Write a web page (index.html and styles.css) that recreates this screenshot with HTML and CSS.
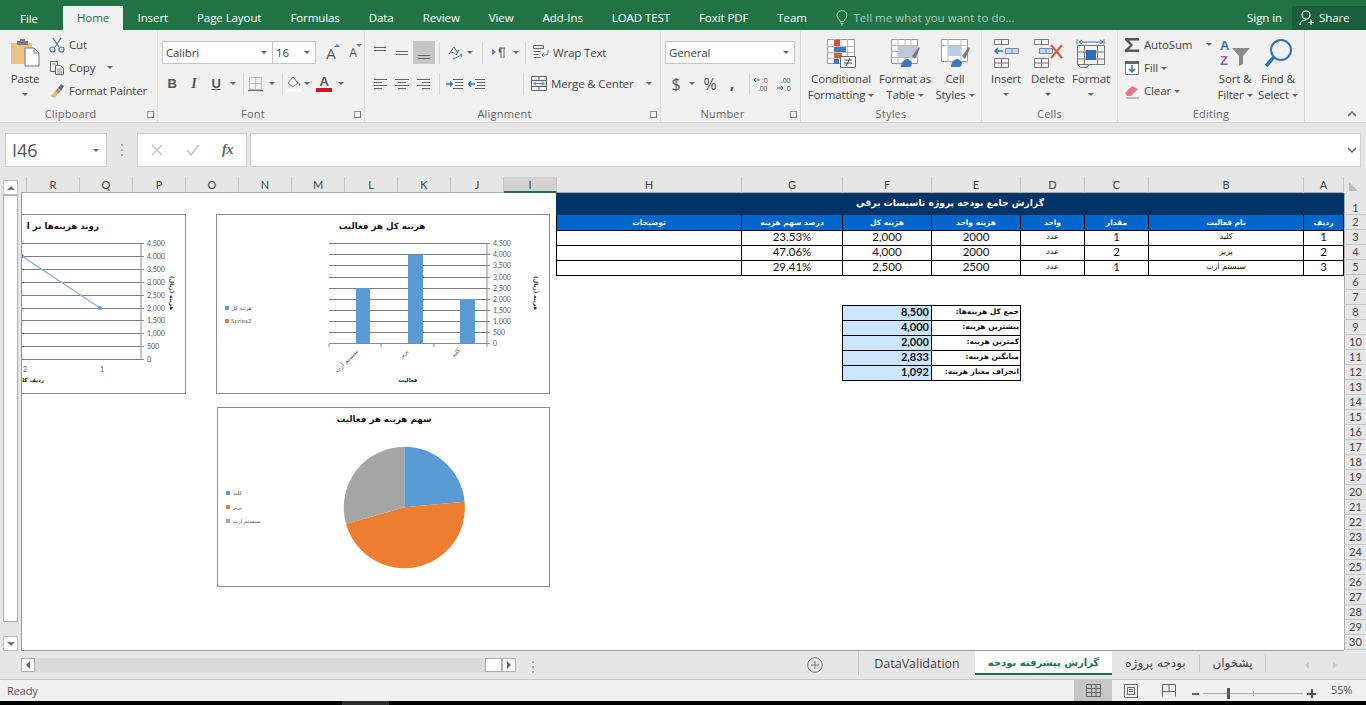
FILE: index.html
```html
<!DOCTYPE html>
<html lang="en">
<head>
<meta charset="utf-8">
<title>Excel</title>
<link rel="stylesheet" href="styles.css">
</head>
<body>
<nav class="tabs">
  <a class="tab file">File</a>
  <a class="tab active">Home</a>
  <a class="tab">Insert</a>
  <a class="tab">Page Layout</a>
  <a class="tab">Formulas</a>
  <a class="tab">Data</a>
  <a class="tab">Review</a>
  <a class="tab">View</a>
  <a class="tab">Add-Ins</a>
  <a class="tab">LOAD TEST</a>
  <a class="tab">Foxit PDF</a>
  <a class="tab">Team</a>
  <div class="tell">
    <svg width="12" height="16" viewBox="0 0 12 16" fill="none" stroke="#a9cdb8" stroke-width="1"><path d="M4 11.5C4 9 1 8.500 1 5.500a5 5 0 0 1 10 0C11 8.500 8 9 8 11.500zM4.500 13.500h3M5 15h2"/></svg>
    <span>Tell me what you want to do...</span>
  </div>
  <a class="signin">Sign in</a>
  <a class="share">
    <svg width="16" height="16" viewBox="0 0 16 16" fill="none" stroke="#fff" stroke-width="1.100"><circle cx="7" cy="5" r="4"/><path d="M1 15c0-3 2-5 6-5M12 9.500v5.500M9.500 12.500h5.500"/></svg>
    <span>Share</span>
  </a>
</nav>

<div class="ribbon">
  <section class="group g-clip">
    <div class="body row-body">
      <div class="big paste">
        <svg class="bigicon" width="30" height="30" viewBox="0 0 30 30"><path d="M1 5h21v21H1z" fill="#e8c383"/><path d="M7 3h3V1h5v2h3v4H7z" fill="#7d7d7d"/><path d="M15 10h9l5 5v13H15z" fill="#fff" stroke="#777"/><path d="M24 10v5h5" fill="none" stroke="#777"/></svg>
        <span>Paste</span>
        <i class="caret"></i>
      </div>
      <div class="smalls">
        <div class="small"><svg width="16" height="16" viewBox="0 0 16 16" fill="none" stroke="#5d6d80" stroke-width="1.200"><path d="M4 1l6 9M12 1L6 10"/><circle cx="3.500" cy="12.500" r="2.500" stroke="#3f78b5"/><circle cx="12.500" cy="12.500" r="2.500" stroke="#3f78b5"/></svg><span>Cut</span></div>
        <div class="small"><svg width="16" height="16" viewBox="0 0 16 16" fill="#fff" stroke="#666"><path d="M1.500 1.500h7v10h-7z"/><path d="M6.500 5.500h5l3 3v6h-8z"/><path d="M8 9h5M8 11h5M8 13h5M3 4h4" stroke-width=".8"/></svg><span>Copy</span><i class="caret cm"></i></div>
        <div class="small"><svg width="16" height="16" viewBox="0 0 16 16"><path d="M9 5l3-4 3 2-3 5z" fill="#6b6b6b"/><path d="M9 5l3 3-3 3-3-3z" fill="#999"/><path d="M6 8l3 3-3 4-5-2c2-1 4-3 5-5z" fill="#e6b872"/></svg><span>Format Painter</span></div>
      </div>
    </div>
    <div class="glabel lx">Clipboard<i class="launch"></i></div>
  </section>

  <section class="group g-font">
    <div class="body col-body">
      <div class="tool-row font-r1">
        <div class="combo c-font"><span>Calibri</span><i class="caret"></i></div>
        <div class="combo c-size"><span>16</span><i class="caret"></i></div>
        <div class="ib grow"><span class="a1">A</span><i class="tri up"></i></div>
        <div class="ib shrink"><span class="a2">A</span><i class="tri down"></i></div>
      </div>
      <div class="tool-row font-r2">
        <div class="ib fb">B</div>
        <div class="ib fi">I</div>
        <div class="ib fu">U</div>
        <i class="caret cb"></i>
        <i class="vsep"></i>
        <div class="ib"><svg width="15" height="15" viewBox="0 0 15 15" fill="none" stroke="#8a8a8a" stroke-dasharray="1 1"><path d="M1.500 1.500h12v12h-12zM7.500 1.500v12M1.500 7.500h12"/><path d="M0 14.500h15" stroke="#666" stroke-dasharray="none"/></svg></div>
        <i class="caret cb"></i>
        <i class="vsep"></i>
        <div class="ib"><svg width="18" height="18" viewBox="0 0 18 18"><path d="M3 8l5-6 5 6-5 4z" fill="#fff" stroke="#777"/><path d="M13 7l3 3-2 1z" fill="#4f81bd"/><path d="M1 14h15v3H1z" fill="#fff"/></svg></div>
        <i class="caret cb tight"></i>
        <div class="ib fa"><span>A</span><i class="bar"></i></div>
        <i class="caret cb"></i>
      </div>
    </div>
    <div class="glabel lx">Font<i class="launch"></i></div>
  </section>

  <section class="group g-align">
    <div class="body col-body">
      <div class="tool-row">
        <div class="ib"><svg width="16" height="14" viewBox="0 0 16 14" stroke="#666"><path d="M2 1.500h12M2 4.500h12"/></svg></div>
        <div class="ib"><svg width="16" height="14" viewBox="0 0 16 14" stroke="#666"><path d="M2 5.500h12M2 8.500h12"/></svg></div>
        <div class="ib on"><svg width="16" height="14" viewBox="0 0 16 14" stroke="#666"><path d="M2 9.500h12M2 12.500h12"/></svg></div>
        <i class="vsep"></i>
        <div class="ib narrow"><svg width="17" height="17" viewBox="0 0 17 17" fill="none"><path d="M2 10l5-7 3 5M3.500 8l4 1M9 11l3-5" stroke="#666"/><path d="M6 15l9-4M13 10l2 1-1 2" stroke="#4f81bd"/></svg></div>
        <i class="caret cb"></i>
        <i class="vsep s2"></i>
        <div class="ib wide"><svg width="14" height="12" viewBox="0 0 14 12"><path d="M0 2l4 3-4 3z" fill="#4f81bd"/><path d="M7 1h6M9 1v10M12 1v10" stroke="#666" fill="none"/><path d="M9 1a2.500 2.500 0 0 0 0 5z" fill="#666"/></svg></div>
        <i class="caret cb"></i>
        <i class="vsep s3"></i>
        <div class="act"><svg width="16" height="16" viewBox="0 0 16 16" fill="none" stroke="#666"><path d="M.5 1.500h10v3H.5zM.5 7.500h7M.5 10.500h5M.5 13.500h7"/><path d="M15 6v3a2 2 0 0 1-2 2H9l2-2M9 11l2 2" stroke="#4f81bd"/></svg><span>Wrap Text</span></div>
      </div>
      <div class="tool-row">
        <div class="ib"><svg width="16" height="12" viewBox="0 0 16 12" stroke="#666"><path d="M2 1.500h13M2 4.500h8M2 7.500h13M2 10.500h8"/></svg></div>
        <div class="ib"><svg width="16" height="12" viewBox="0 0 16 12" stroke="#666"><path d="M1 1.500h14M4 4.500h8M1 7.500h14M4 10.500h8"/></svg></div>
        <div class="ib"><svg width="16" height="12" viewBox="0 0 16 12" stroke="#666"><path d="M1 1.500h13M6 4.500h8M1 7.500h13M6 10.500h8"/></svg></div>
        <i class="vsep"></i>
        <div class="ib indent"><svg width="17" height="12" viewBox="0 0 17 12" stroke="#666" fill="none"><path d="M7 1.500h10M9 4.500h8M9 7.500h8M7 10.500h10"/><path d="M0 6h6M4 3.500L6.500 6 4 8.500" stroke="#2f75b5" stroke-width="1.300"/></svg></div>
        <div class="ib indent2"><svg width="17" height="12" viewBox="0 0 17 12" stroke="#666" fill="none"><path d="M7 1.500h10M9 4.500h8M9 7.500h8M7 10.500h10"/><path d="M7 6H1M3 3.500L.5 6 3 8.500" stroke="#2f75b5" stroke-width="1.300"/></svg></div>
        <i class="vsep s4"></i>
        <div class="act"><svg width="16" height="15" viewBox="0 0 16 15" fill="none" stroke="#666"><path d="M.5.500h15v14H.5zM.500 4.500h15M.500 10.500h15M8 .5v4M8 10.500v4"/><path d="M3 7.500h10M5 5.500l-2 2 2 2M11 5.500l2 2-2 2" stroke="#4f81bd"/></svg><span>Merge &amp; Center</span><i class="caret cm2"></i></div>
      </div>
    </div>
    <div class="glabel lx">Alignment<i class="launch"></i></div>
  </section>

  <section class="group g-num">
    <div class="body col-body">
      <div class="tool-row">
        <div class="combo c-num"><span>General</span><i class="caret"></i></div>
      </div>
      <div class="tool-row num-r2">
        <div class="ib dollar">$</div>
        <i class="caret cb"></i>
        <div class="ib pct">%</div>
        <div class="ib comma">,</div>
        <i class="vsep"></i>
        <div class="ib dec"><svg width="18" height="16" viewBox="0 0 18 16"><path d="M7 4H1M3 2L1 4l2 2" fill="none" stroke="#2f75b5"/><text x="9" y="7" class="dt">.0</text><text x="5" y="14.500" class="dt">.00</text></svg></div>
        <div class="ib dec"><svg width="18" height="16" viewBox="0 0 18 16"><text x="5" y="7" class="dt">.00</text><path d="M7 12H1M5 10l2 2-2 2" fill="none" stroke="#2f75b5"/><text x="9" y="14.500" class="dt">.0</text></svg></div>
      </div>
    </div>
    <div class="glabel lx">Number<i class="launch"></i></div>
  </section>

  <section class="group g-styles">
    <div class="body row-body">
      <div class="big b-cf">
        <svg class="bigicon" width="30" height="30" viewBox="0 0 30 30"><path d="M1.500 1.500h27v24h-27z" fill="#fff" stroke="#999"/><path d="M1 8.500h28M1 14.500h28M1 20.500h28M8.500 1v25M15 1v25M21.500 1v25" stroke="#bbb"/><path d="M8 2h6v6H8z" fill="#d0543d"/><path d="M8 9h12v5H8z" fill="#3a78bf"/><path d="M8 15h8v5H8z" fill="#d0632d"/><path d="M8 21h5v5H8z" fill="#3a78bf"/><path d="M14.500 18.500h15v11h-15z" fill="#fff" stroke="#666"/><path d="M18 22h8M18 25h8M24 20l-4 8" stroke="#444" fill="none"/></svg>
        <span>Conditional</span>
        <span>Formatting<i class="caret il"></i></span>
      </div>
      <div class="big b-ft">
        <svg class="bigicon" width="30" height="30" viewBox="0 0 30 30"><path d="M1.500 1.500h26v24h-26z" fill="#fff" stroke="#999"/><path d="M1 7.500h27M1 13.500h27M1 19.500h27M8 1v25M15 1v25M21 1v25" stroke="#bbb"/><path d="M8 8h20v11H8z" fill="#bcc9d9"/><path d="M22 18l7-9 1 1-5 11z" fill="#777"/><path d="M11 29c0-5 3-8 7-8l4 3c0 3-1 5-3 5z" fill="#3a78bf"/></svg>
        <span>Format as</span>
        <span>Table<i class="caret il"></i></span>
      </div>
      <div class="big b-cs">
        <svg class="bigicon" width="30" height="30" viewBox="0 0 30 30"><path d="M1.500 1.500h26v22h-26z" fill="#fff" stroke="#999"/><path d="M1 7.500h27M8 1v23M21 1v23" stroke="#bbb"/><path d="M8 8h13v10H8z" fill="#b6cde6"/><path d="M22 18l7-9 1 1-5 11z" fill="#777"/><path d="M11 29c0-5 3-8 7-8l4 3c0 3-1 5-3 5z" fill="#3a78bf"/></svg>
        <span>Cell</span>
        <span>Styles<i class="caret il"></i></span>
      </div>
    </div>
    <div class="glabel">Styles</div>
  </section>

  <section class="group g-cells">
    <div class="body row-body">
      <div class="big b-ins">
        <svg class="bigicon" width="30" height="30" viewBox="0 0 30 30" fill="none" stroke="#777"><path d="M3.500 1.500h14v5h-14zM10.500 1.500v5M3.500 20.500h14v9h-14zM3.500 25h14M10.500 20.500v9"/><path d="M14.500 10.500h13v5h-13zM21 10.500v5" fill="#c9d7e8" stroke="#6f8db0"/><path d="M12 13H4M7 10l-3 3 3 3" stroke="#2f75b5" stroke-width="1.500"/></svg>
        <span>Insert</span>
        <i class="caret"></i>
      </div>
      <div class="big b-del">
        <svg class="bigicon" width="30" height="30" viewBox="0 0 30 30" fill="none" stroke="#777"><path d="M1.500 1.500h14v5h-14zM8.500 1.500v5M1.500 20.500h14v9h-14zM1.500 25h14M8.500 20.500v9"/><path d="M6.500 10.500h13v5h-13zM13 10.500v5" fill="#c9d7e8" stroke="#6f8db0"/><path d="M18 7l11 13M29 7L18 20" stroke="#d9593d" stroke-width="2"/></svg>
        <span>Delete</span>
        <i class="caret"></i>
      </div>
      <div class="big b-fmt">
        <svg class="bigicon" width="30" height="30" viewBox="0 0 30 30" fill="none" stroke="#777"><path d="M1.500 7.500h27v19h-27zM8.500 7.500v19M21.500 7.500v19M1.500 14h27M1.500 21h27"/><path d="M10 12h10v10H10z" fill="#2f6db0" stroke="none"/><path d="M1 1.500v5M28 1.500v5M3 4h24M6 2L3 4l3 2M24 2l3 2-3 2" stroke="#2f75b5"/><path d="M1.500 26.500l3 3h6l3-3" /></svg>
        <span>Format</span>
        <i class="caret"></i>
      </div>
    </div>
    <div class="glabel">Cells</div>
  </section>

  <section class="group g-edit">
    <div class="body row-body">
      <div class="smalls edit-list">
        <div class="small"><svg width="16" height="16" viewBox="0 0 16 16"><path d="M1 1h14v2.500H5L9 8l-4 4.500h10V15H1v-2l5-5-5-5z" fill="#595959"/></svg><span>AutoSum</span><i class="caret cs"></i></div>
        <div class="small"><svg width="16" height="16" viewBox="0 0 16 16"><path d="M1.500 1.500h13v13h-13z" fill="#fff" stroke="#777"/><path d="M1 1h14v3H1z" fill="#666"/><path d="M8 5v7M5 9l3 3 3-3" fill="none" stroke="#2f75b5" stroke-width="1.500"/></svg><span>Fill<i class="caret il"></i></span></div>
        <div class="small"><svg width="16" height="16" viewBox="0 0 16 16"><path d="M1 10l7-7 6 3-7 7H3z" fill="#e8788e"/><path d="M2 15h13" stroke="#888"/></svg><span>Clear<i class="caret il"></i></span></div>
      </div>
      <div class="big b-sort">
        <svg class="bigicon" width="32" height="30" viewBox="0 0 32 30"><text x="1" y="12" class="az a">A</text><text x="1" y="27" class="az z">Z</text><path d="M13 10h18l-7 8v8l-4 2V18z" fill="#8a8a8a"/></svg>
        <span>Sort &amp;</span>
        <span>Filter<i class="caret il"></i></span>
      </div>
      <div class="big b-find">
        <svg class="bigicon" width="30" height="30" viewBox="0 0 30 30" fill="none"><circle cx="18" cy="12" r="10" stroke="#2f75b5" stroke-width="2"/><path d="M11 19L3 28" stroke="#2f75b5" stroke-width="3.500"/></svg>
        <span>Find &amp;</span>
        <span>Select<i class="caret il"></i></span>
      </div>
    </div>
    <div class="glabel">Editing</div>
  </section>

  <svg class="collapse" width="10" height="6" viewBox="0 0 10 6" fill="none" stroke="#666" stroke-width="1.500"><path d="M1 5l4-4 4 4"/></svg>
</div>

<div class="formula">
  <div class="namebox"><span>I46</span><i class="caret"></i></div>
  <div class="fdots"><i></i><i></i><i></i></div>
  <div class="fxbox">
    <svg width="14" height="14" viewBox="0 0 14 14" stroke="#c6c6c6" stroke-width="1.600"><path d="M2 2l10 10M12 2L2 12"/></svg>
    <svg width="16" height="14" viewBox="0 0 16 14" stroke="#c6c6c6" stroke-width="1.600" fill="none"><path d="M2 7l4 5 8-10"/></svg>
    <em>fx</em>
  </div>
  <div class="finput"><svg width="10" height="6" viewBox="0 0 10 6" fill="none" stroke="#666" stroke-width="1.500"><path d="M1 1l4 4 4-4"/></svg></div>
</div>

<div class="workbook">
  <div class="vscroll">
    <div class="vb"><i class="tri up gray"></i></div>
    <div class="vthumb"></div>
    <div class="vb"><i class="tri down gray"></i></div>
  </div>
  <div class="main">
    <div class="cols">
      <div class="ch"></div><div class="ch">R</div><div class="ch">Q</div><div class="ch">P</div><div class="ch">O</div><div class="ch">N</div><div class="ch">M</div><div class="ch">L</div><div class="ch">K</div><div class="ch">J</div><div class="ch sel">I</div><div class="ch">H</div><div class="ch">G</div><div class="ch">F</div><div class="ch">E</div><div class="ch">D</div><div class="ch">C</div><div class="ch">B</div><div class="ch">A</div>
    </div>
    <div class="sheet">
      <table class="report" dir="rtl">
        <colgroup><col class="w40"><col class="w155"><col class="w64"><col class="w64"><col class="w89"><col class="w89"><col class="w101"><col class="w185"></colgroup>
        <tr class="r-title"><td colspan="8">گزارش جامع بودجه پروژه تاسیسات برقي</td></tr>
        <tr class="r-head"><td>ردیف</td><td>نام فعالیت</td><td>مقدار</td><td>واحد</td><td>هزینه واحد</td><td>هزینه کل</td><td>درصد سهم هزینه</td><td>توضیحات</td></tr>
        <tr class="r-data"><td>1</td><td class="fa-t">کلید</td><td>1</td><td class="fa-t">عدد</td><td>2000</td><td>2,000</td><td>23.53%</td><td></td></tr>
        <tr class="r-data"><td>2</td><td class="fa-t">پریز</td><td>2</td><td class="fa-t">عدد</td><td>2000</td><td>4,000</td><td>47.06%</td><td></td></tr>
        <tr class="r-data"><td>3</td><td class="fa-t">سیستم ارت</td><td>1</td><td class="fa-t">عدد</td><td>2500</td><td>2,500</td><td>29.41%</td><td></td></tr>
      </table>
      <table class="summary" dir="rtl">
        <colgroup><col class="w89"><col class="w89"></colgroup>
        <tr><th>جمع کل هزینه‌ها:</th><td>8,500</td></tr>
        <tr><th>بیشترین هزینه:</th><td>4,000</td></tr>
        <tr><th>کمترین هزینه:</th><td>2,000</td></tr>
        <tr><th>میانگین هزینه:</th><td>2,833</td></tr>
        <tr><th>انحراف معیار هزینه:</th><td>1,092</td></tr>
      </table>

      <div class="chart c-line">
        <svg width="333" height="179" viewBox="-148 214 333 179">
          <text x="99" y="229" class="ctitle" direction="rtl" text-anchor="start">روند هزینه‌ها بر ا</text>
          <g class="gl"><path d="M22 243.500H141M22 256.500H141M22 269.500H141M22 282.500H141M22 295.500H141M22 308.500H141M22 320.500H141M22 333.500H141M22 346.500H141M22 359.500H141"/></g>
          <path d="M141 243v117M141 243.500h3M141 256.500h3M141 269.500h3M141 282.500h3M141 295.500h3M141 308.500h3M141 320.500h3M141 333.500h3M141 346.500h3M141 359.500h3" class="ax"/>
          <path d="M22 256L100 308" class="ln"/>
          <circle cx="22" cy="256" r="2" class="pt"/><circle cx="100" cy="308" r="2" class="pt"/>
          <g class="tk"><text x="147" y="246">4,500</text><text x="147" y="259">4,000</text><text x="147" y="272">3,500</text><text x="147" y="285">3,000</text><text x="147" y="298">2,500</text><text x="147" y="311">2,000</text><text x="147" y="323">1,500</text><text x="147" y="336">1,000</text><text x="147" y="349">500</text><text x="147" y="362">0</text><text x="100" y="372">1</text><text x="23" y="372">2</text></g>
          <text x="44" y="382" class="atitle" direction="rtl" text-anchor="start">ردیف کا</text>
          <text transform="translate(170 293) rotate(90)" class="atitle" text-anchor="middle">هزینه (ریال)</text>
        </svg>
      </div>

      <div class="chart c-bar">
        <svg width="333" height="179" viewBox="216 214 333 179">
          <text x="382" y="229" class="ctitle" text-anchor="middle">هزینه کل هر فعالیت</text>
          <path class="gl" d="M329 243.500H487M329 254.500H487M329 265.500H487M329 277.500H487M329 288.500H487M329 299.500H487M329 310.500H487M329 321.500H487M329 332.500H487M329 343.500H487"/>
          <path fill="#5b9bd5" d="M356 288h14v56h-14zM408 255h15v89h-15zM460 299h15v45h-15z"/>
          <path class="ax" d="M329 343.500H487M487 243v101M487 243.500h3M487 254.500h3M487 265.500h3M487 277.500h3M487 288.500h3M487 299.500h3M487 310.500h3M487 321.500h3M487 332.500h3M487 343.500h3M329 344v3M381 344v3M434 344v3M487 344v3"/>
          <g class="tk"><text x="493" y="246">4,500</text><text x="493" y="257">4,000</text><text x="493" y="268">3,500</text><text x="493" y="280">3,000</text><text x="493" y="291">2,500</text><text x="493" y="302">2,000</text><text x="493" y="313">1,500</text><text x="493" y="324">1,000</text><text x="493" y="335">500</text><text x="493" y="346">0</text></g>
          <text transform="translate(534 293) rotate(90)" class="atitle" text-anchor="middle">هزینه (ریال)</text>
          <text x="408" y="382" class="atitle" text-anchor="middle">فعالیت</text>
          <g class="catl" text-anchor="middle"><text transform="translate(348 362) rotate(-45)">سیستم ارت</text><text transform="translate(405 355) rotate(-45)">پریز</text><text transform="translate(457 354) rotate(-45)">کلید</text></g>
          <rect x="225" y="306" width="4" height="4" fill="#5b9bd5"/><rect x="225" y="319" width="4" height="4" fill="#ed7d31"/>
          <text x="231" y="310" class="lg">هزینه کل</text><text x="231" y="323" class="lg">Series2</text>
        </svg>
      </div>

      <div class="chart c-pie">
        <svg width="333" height="180" viewBox="217 407 333 180">
          <text x="384" y="422" class="ctitle" text-anchor="middle">سهم هزینه هر فعالیت</text>
          <path fill="#5b9bd5" d="M404.300 507.300V446.800A60.500 60.500 0 0 1 464.600 501.700z"/>
          <path fill="#ed7d31" d="M404.300 507.300L464.600 501.700A60.500 60.500 0 0 1 346.100 523.900z"/>
          <path fill="#a5a5a5" d="M404.300 507.300L346.100 523.900A60.500 60.500 0 0 1 404.300 446.800z"/>
          <rect x="226" y="491" width="4" height="4" fill="#5b9bd5"/><rect x="226" y="505" width="4" height="4" fill="#ed7d31"/><rect x="226" y="519" width="4" height="4" fill="#a5a5a5"/>
          <text x="233" y="495" class="lg">کلید</text><text x="233" y="509" class="lg">پریز</text><text x="233" y="523" class="lg">سیستم ارت</text>
        </svg>
      </div>
    </div>
  </div>
  <div class="rows">
    <div class="corner"><i></i></div>
    <div class="rh r1">1</div><div class="rh">2</div><div class="rh">3</div><div class="rh">4</div><div class="rh">5</div><div class="rh">6</div><div class="rh">7</div><div class="rh">8</div><div class="rh">9</div><div class="rh">10</div><div class="rh">11</div><div class="rh">12</div><div class="rh">13</div><div class="rh">14</div><div class="rh">15</div><div class="rh">16</div><div class="rh">17</div><div class="rh">18</div><div class="rh">19</div><div class="rh">20</div><div class="rh">21</div><div class="rh">22</div><div class="rh">23</div><div class="rh">24</div><div class="rh">25</div><div class="rh">26</div><div class="rh">27</div><div class="rh">28</div><div class="rh">29</div><div class="rh">30</div>
  </div>
</div>

<div class="sheetbar">
  <div class="hbtn"><i class="tri left"></i></div>
  <div class="htrack"><div class="hthumb"></div></div>
  <div class="hbtn"><i class="tri right"></i></div>
  <div class="hdots"><i></i><i></i><i></i></div>
  <div class="addsheet"><svg width="16" height="16" viewBox="0 0 16 16" fill="none" stroke="#777"><circle cx="8" cy="8" r="7.300"/><path d="M4 8h8M8 4v8"/></svg></div>
  <div class="stabs">
    <div class="stab">DataValidation</div>
    <div class="stab cur">گزارش پیشرفته بودجه</div>
    <div class="stab fa-s b1">بودجه پروژه</div>
    <div class="stab fa-s b2">پشخوان</div>
  </div>
  <div class="snav"><i class="tri left pale"></i><i class="tri right pale"></i></div>
</div>

<footer class="status">
  <span class="ready">Ready</span>
  <div class="views">
    <div class="vw on"><svg width="15" height="13" viewBox="0 0 15 13" fill="none" stroke="#666"><path d="M.5.500h14v12H.5zM.500 4.500h14M.500 8.500h14M5.500.5v12M10 .5v12"/></svg></div>
    <div class="vw"><svg width="14" height="14" viewBox="0 0 14 14" fill="none" stroke="#666"><path d="M.5.500h13v13H.5zM3.500 3.500h7v7h-7zM5 5.500h4M5 7.500h4"/></svg></div>
    <div class="vw"><svg width="14" height="13" viewBox="0 0 14 13" fill="none" stroke="#666"><path d="M.5 12.500V.5h13v12M7 .5v7H.5M7 7.500h6.500"/></svg></div>
  </div>
  <div class="zoomer">
    <i class="minus"></i>
    <div class="slider"><i class="thumb"></i><i class="mid"></i></div>
    <i class="plus"></i>
  </div>
  <span class="pctz">55%</span>
</footer>
<div class="taskbar"><i></i></div>
</body>
</html>
```
FILE: styles.css
```css
* { box-sizing: border-box; }
html, body { margin: 0; padding: 0; }
body { width: 1366px; height: 705px; overflow: hidden; background: #e6e6e6; font-family: "Open Sans", "Noto Sans", sans-serif; font-size: 11.5px; letter-spacing: -.15px; color: #444; }
i { display: block; font-style: normal; }
svg { display: block; flex: none; }

/* top tabs */
.tabs { height: 30px; background: #217346; display: flex; align-items: flex-end; padding-left: 9px; color: #fff; letter-spacing: -.08px; }
.tab { height: 24px; padding: 4px 14.5px 0; white-space: nowrap; }
.tab.file { width: 40px; padding: 5px 0 0; text-align: center; margin-right: 14px; }
.tab.active { width: 60px; background: #f1f1f1; color: #217346; padding: 4px 0 0; text-align: center; }
.tell { height: 24px; margin-left: 15px; padding-bottom: 1px; display: flex; gap: 5px; align-items: center; color: #a9cdb8; letter-spacing: .03px; }
.signin { height: 24px; padding-top: 4px; margin-left: auto; }
.share { width: 74px; height: 24px; margin-left: 10px; padding-bottom: 1px; background: #1b5e3a; display: flex; gap: 4px; align-items: center; padding-left: 7px; }

/* ribbon */
.ribbon { height: 93px; background: #f1f1f1; border-bottom: 1px solid #d4d4d4; display: flex; padding-top: 1px; position: relative; }
.group { display: flex; flex-direction: column; height: 91px; border-right: 1px solid #dcdcdc; }
.g-clip { width: 158px; }
.g-font { width: 207px; }
.g-align { width: 296px; }
.g-num { width: 140px; }
.g-styles { width: 181px; }
.g-cells { width: 136px; }
.g-edit { width: 187px; }
.body { height: 74px; }
.row-body { display: flex; }
.col-body { display: flex; flex-direction: column; gap: 8px; padding-top: 10px; }
.glabel { height: 17px; text-align: center; font-size: 11px; line-height: 18px; color: #666; position: relative; letter-spacing: .2px; }
.glabel.lx { padding-right: 16px; }
.launch { position: absolute; right: 3px; top: 6px; width: 7px; height: 7px; border-left: 1px solid #999; border-top: 1px solid #999; border-right: 1px solid #777; border-bottom: 1px solid #777; }

.caret { width: 0; height: 0; border-left: 3px solid transparent; border-right: 3px solid transparent; border-top: 3px solid #666; flex: none; }
.caret.il { display: inline-block; margin-left: 3px; vertical-align: middle; }

.big { display: flex; flex-direction: column; align-items: center; padding-top: 7px; line-height: 16px; white-space: nowrap; color: #444; }
.bigicon { margin-bottom: 3px; }
.big > .caret { margin-top: 6px; }
.paste { width: 38px; margin-left: 6px; }
.smalls { margin-left: 5px; padding-top: 2px; }
.small { height: 23px; display: flex; align-items: center; gap: 4px; white-space: nowrap; }
.cm { margin-left: 8px; }
.cs { margin-left: 10px; }
.edit-list { width: 90px; margin-left: 6px; }

.tool-row { display: flex; align-items: center; height: 23px; }
.combo { height: 23px; background: #fff; border: 1px solid #c6c6c6; display: flex; align-items: center; justify-content: space-between; padding: 0 5px 1px 3px; }
.c-font { width: 111px; margin-left: 4px; }
.c-size { width: 44px; margin-left: -1px; }
.c-num { width: 130px; margin-left: 4px; }
.ib { width: 22px; height: 23px; display: flex; align-items: center; justify-content: center; flex: none; position: relative; }
.ib.on { background: #c6c6c6; }
.ib.narrow { width: 17px; margin-left: 7px; }
.ib.wide { width: 22px; margin-left: 5px; }
.vsep { width: 1px; height: 22px; background: #d4d4d4; margin-left: 4px; flex: none; }
.vsep.s2 { margin-left: 6px; }
.vsep.s3 { margin-left: 3px; }
.vsep.s4 { margin-left: 38px; }
.cb { margin: 0 3px; }
.cb.tight { margin: 0 3px 0 -1px; }
.act { display: flex; align-items: center; gap: 4px; margin-left: 7px; padding-bottom: 1px; white-space: nowrap; }
.cm2 { margin-left: 9px; }
.g-align .tool-row > .ib:first-child { margin-left: 4px; }
.indent { margin-left: 6px; width: 17px; }
.indent2 { margin-left: 5px; width: 17px; }
.grow { margin-left: 5px; width: 20px; }
.shrink { margin-left: 2px; width: 20px; }
.a1 { font-size: 15px; color: #555; }
.a2 { font-size: 12px; color: #555; }
.tri { width: 0; height: 0; border-left: 3px solid transparent; border-right: 3px solid transparent; }
.tri.up { border-bottom: 3px solid #4f81bd; }
.tri.down { border-top: 3px solid #4f81bd; }
.grow .tri, .shrink .tri { position: absolute; right: 1px; top: 3px; }
.tri.gray.up { border-left-width: 4px; border-right-width: 4px; border-bottom: 4px solid #777; }
.tri.gray.down { border-left-width: 4px; border-right-width: 4px; border-top: 4px solid #777; }
.tri.left { border: 3px solid transparent; border-left: 0; border-right: 4px solid #666; border-top-width: 4px; border-bottom-width: 4px; }
.tri.right { border: 3px solid transparent; border-right: 0; border-left: 4px solid #666; border-top-width: 4px; border-bottom-width: 4px; }
.tri.pale.left { border-right-color: #c8c8c8; }
.tri.pale.right { border-left-color: #c8c8c8; }
.font-r2 { margin-left: 3px; }
.fb { font-family: "Liberation Sans", sans-serif; font-weight: bold; font-size: 13px; color: #555; }
.fi { font-family: "Liberation Serif", serif; font-style: italic; font-weight: bold; font-size: 14px; color: #555; }
.fu { font-family: "Liberation Sans", sans-serif; font-weight: bold; font-size: 13px; color: #555; text-decoration: underline; }
.fa { flex-direction: column; font-family: "Liberation Sans", sans-serif; font-weight: bold; font-size: 13px; line-height: 12px; color: #555; }
.fa .bar { width: 16px; height: 4px; background: #d9121f; }
.num-r2 { margin-left: 5px; }
.dollar { font-size: 16px; width: 20px; color: #555; }
.pct { font-size: 16px; margin-left: 1px; color: #555; }
.comma { font-size: 16px; font-weight: bold; color: #555; align-items: flex-start; }
.num-r2 .vsep { margin-left: 6px; }
.num-r2 .dec { margin-left: 1px; }
.dt { font-family: "Open Sans", sans-serif; font-size: 7px; fill: #555; }

.b-cf { width: 62px; margin-left: 9px; }
.b-ft { width: 58px; margin-left: 4px; }
.b-cs { width: 42px; }
.b-ins { width: 42px; margin-left: 3px; }
.b-del { width: 42px; }
.b-fmt { width: 44px; }
.b-sort { width: 42px; }
.b-find { width: 42px; margin-left: 1px; }
.az { font-family: "Liberation Sans", sans-serif; font-size: 13px; font-weight: bold; }
.az.a { fill: #3a78bf; }
.az.z { fill: #8f5fb5; }
.collapse { position: absolute; right: 9px; bottom: 5px; }

/* formula bar */
.formula { height: 54px; padding-top: 10px; display: flex; background: #e6e6e6; }
.namebox { width: 102px; height: 34px; margin-left: 5px; background: #fff; border: 1px solid #d0d0d0; display: flex; align-items: center; justify-content: space-between; padding: 0 7px 0 6px; font-size: 18px; letter-spacing: 0; color: #555; }
.fdots { width: 30px; height: 34px; display: flex; flex-direction: column; gap: 3px; align-items: center; justify-content: center; }
.fdots i, .hdots i { width: 2px; height: 2px; background: #aaa; }
.fxbox { width: 110px; height: 34px; background: #fff; border: 1px solid #d0d0d0; display: flex; align-items: center; gap: 21px; padding-left: 12px; }
.fxbox em { font-family: "Liberation Serif", serif; font-size: 14px; color: #666; font-weight: bold; }
.finput { width: 1111px; height: 34px; margin-left: 3px; background: #fff; border: 1px solid #d0d0d0; display: flex; align-items: center; justify-content: flex-end; padding-right: 3px; }

/* workbook */
.workbook { height: 474px; display: flex; }
.vscroll { width: 21px; padding: 3px 3px 0 3px; display: flex; flex-direction: column; }
.vb { width: 15px; height: 15px; background: #fff; border: 1px solid #c0c0c0; display: flex; align-items: center; justify-content: center; flex: none; }
.vthumb { height: 428px; background: #fff; border: 1px solid #ababab; margin-bottom: 14px; }
.main { width: 1323px; display: flex; flex-direction: column; }
.cols { height: 16px; padding-left: 1px; display: grid; grid-template-columns: 5px repeat(10, 53px) 185px 101px 89px 89px 64px 64px 155px 40px; background: #e6e6e6; border-bottom: 1px solid #ababab; }
.ch { font-family: Lato, sans-serif; font-size: 11px; letter-spacing: 0; line-height: 15px; text-align: center; color: #444; border-right: 1px solid #c6c6c6; }
.ch.sel { background: #d2d2d2; border-bottom: 2px solid #217346; height: 16px; }
.sheet { height: 458px; position: relative; overflow: hidden; background: #fff; border-left: 1px solid #9a9a9a; border-bottom: 1px solid #9a9a9a; }
.rows { width: 22px; display: flex; flex-direction: column; }
.corner { height: 16px; background: #e6e6e6; position: relative; }
.corner i { position: absolute; left: 5px; bottom: 2px; width: 0; height: 0; border-bottom: 9px solid #bcbcbc; border-right: 9px solid transparent; }
.rh { height: 15px; flex: none; background: #e6e6e6; border-bottom: 1px solid #c6c6c6; border-left: 1px solid #ababab; font-family: Lato, sans-serif; font-size: 11px; letter-spacing: 0; line-height: 14px; text-align: center; color: #444; }
.rh.r1 { height: 22px; line-height: 29px; }

/* tables */
table { border-collapse: collapse; table-layout: fixed; font-family: Lato, "DejaVu Sans", sans-serif; letter-spacing: 0; color: #111; }
.report { width: 787px; margin-left: auto; font-size: 11.5px; }
.w40 { width: 40px; } .w64 { width: 64px; } .w89 { width: 89px; } .w101 { width: 101px; } .w155 { width: 155px; } .w185 { width: 185px; }
td, th { padding: 0; overflow: hidden; white-space: nowrap; }
.r-title td { height: 22px; padding-bottom: 3px; background: #003366; color: #fff; font-family: "DejaVu Sans", sans-serif; font-weight: bold; font-size: 9.200px; text-align: center; }
.r-head td { height: 15px; background: #0066cc; color: #fff; font-family: "DejaVu Sans", sans-serif; font-size: 7.500px; font-weight: bold; text-align: center; border-left: 1px solid #000; border-right: 1px solid #000; line-height: 13px; }
.r-data td { height: 15px; padding-bottom: 1px; text-align: center; border: 1px solid #000; line-height: 12px; }
.r-data .fa-t { font-family: "DejaVu Sans", sans-serif; font-size: 8px; }
.summary { width: 178px; margin: 29px 323px 0 auto; font-size: 11px; }
.summary th { height: 15px; padding: 0 1px 1px 0; background: #fff; border: 1px solid #000; font-family: "DejaVu Sans", sans-serif; font-size: 7.500px; font-weight: bold; text-align: right; line-height: 12px; }
.summary td { padding: 0 2px 1px 0; background: #cce5ff; border: 1px solid #000; text-align: right; font-weight: bold; line-height: 12px; }

/* charts */
.chart { position: absolute; background: #fff; border: 1px solid #8c8c8c; width: 334px; height: 180px; }
.c-line { left: -170px; top: 21px; }
.c-bar { left: 194px; top: 21px; }
.c-pie { left: 195px; top: 214px; width: 333px; }
.chart svg { margin: -1px 0 0 -1px; overflow: visible; }
.ctitle { font-family: "DejaVu Sans", sans-serif; font-size: 8.700px; font-weight: bold; fill: #111; letter-spacing: 0; }
.atitle { font-family: "DejaVu Sans", sans-serif; font-size: 5.500px; font-weight: bold; fill: #222; letter-spacing: 0; }
.gl { stroke: #7d7d7d; fill: none; }
.ax { stroke: #8a8a8a; fill: none; }
.ln { stroke: #8ab4dc; stroke-width: 1.500; fill: none; }
.pt { fill: #5b9bd5; }
.tk { font-family: Lato, sans-serif; font-size: 7px; fill: #555; letter-spacing: 0; }
.catl { font-family: "DejaVu Sans", sans-serif; font-size: 6px; fill: #555; letter-spacing: 0; }
.lg { font-family: "DejaVu Sans", Lato, sans-serif; font-size: 5.500px; fill: #555; letter-spacing: 0; }

/* sheet tab bar */
.sheetbar { height: 29px; display: flex; align-items: flex-start; background: #e6e6e6; border-bottom: 1px solid #c6c6c6; position: relative; }
.hbtn { width: 14px; height: 14px; margin-top: 7px; background: #fff; border: 1px solid #b0b0b0; display: flex; align-items: center; justify-content: center; flex: none; }
.hbtn:first-child { margin-left: 21px; }
.htrack { width: 467px; height: 14px; margin-top: 7px; background: #d9d9d9; display: flex; justify-content: flex-end; }
.hthumb { width: 17px; height: 14px; background: #fff; border: 1px solid #ababab; }
.hdots { display: flex; flex-direction: column; gap: 3px; width: 2px; margin: 10px 0 0 16px; }
.addsheet { margin: 6px 0 0 273px; }
.stabs { display: flex; margin-left: 35px; height: 24px; border-left: 1px solid #c6c6c6; }
.stab { height: 24px; font-size: 12.500px; letter-spacing: 0; line-height: 26px; color: #444; white-space: nowrap; }
.stab:first-child { width: 116px; text-align: center; }
.stab.cur { width: 137px; background: #fff; border-bottom: 2px solid #217346; color: #217346; font-family: "DejaVu Sans", sans-serif; font-weight: bold; font-size: 10px; text-align: center; line-height: 24px; }
.stab.fa-s { font-family: "DejaVu Sans", sans-serif; font-size: 12px; text-align: center; margin-top: 4px; height: 17px; line-height: 17px; border-right: 1px solid #c6c6c6; }
.b1 { width: 88px; }
.b2 { width: 66px; }
.snav { position: absolute; left: 1305px; top: 10px; display: flex; gap: 24px; }

/* status */
.status { height: 21px; background: #f1f1f1; display: flex; align-items: center; position: relative; }
.ready { margin-left: 7px; font-size: 11px; color: #555; }
.views { display: flex; position: absolute; left: 1074px; top: 0; height: 21px; }
.vw { width: 38px; display: flex; align-items: center; justify-content: center; }
.vw.on { background: #c6c6c6; }
.zoomer { display: flex; align-items: center; position: absolute; left: 1192px; top: 9px; }
.minus { width: 7px; height: 2px; background: #666; }
.slider { width: 100px; height: 1px; background: #aaa; margin: 0 4px; position: relative; }
.thumb { position: absolute; left: 24px; top: -5px; width: 3px; height: 11px; background: #555; }
.mid { position: absolute; left: 50px; top: -2px; width: 1px; height: 5px; background: #aaa; }
.plus { width: 9px; height: 9px; background: linear-gradient(#555, #555) center / 9px 2px no-repeat, linear-gradient(#555, #555) center / 2px 9px no-repeat; }
.pctz { position: absolute; left: 1331px; top: 2px; font-size: 11px; color: #555; }
.taskbar { height: 5px; background: #000; padding-left: 342px; }
.taskbar i { width: 47px; height: 5px; background: #2e2e2e; }
```
